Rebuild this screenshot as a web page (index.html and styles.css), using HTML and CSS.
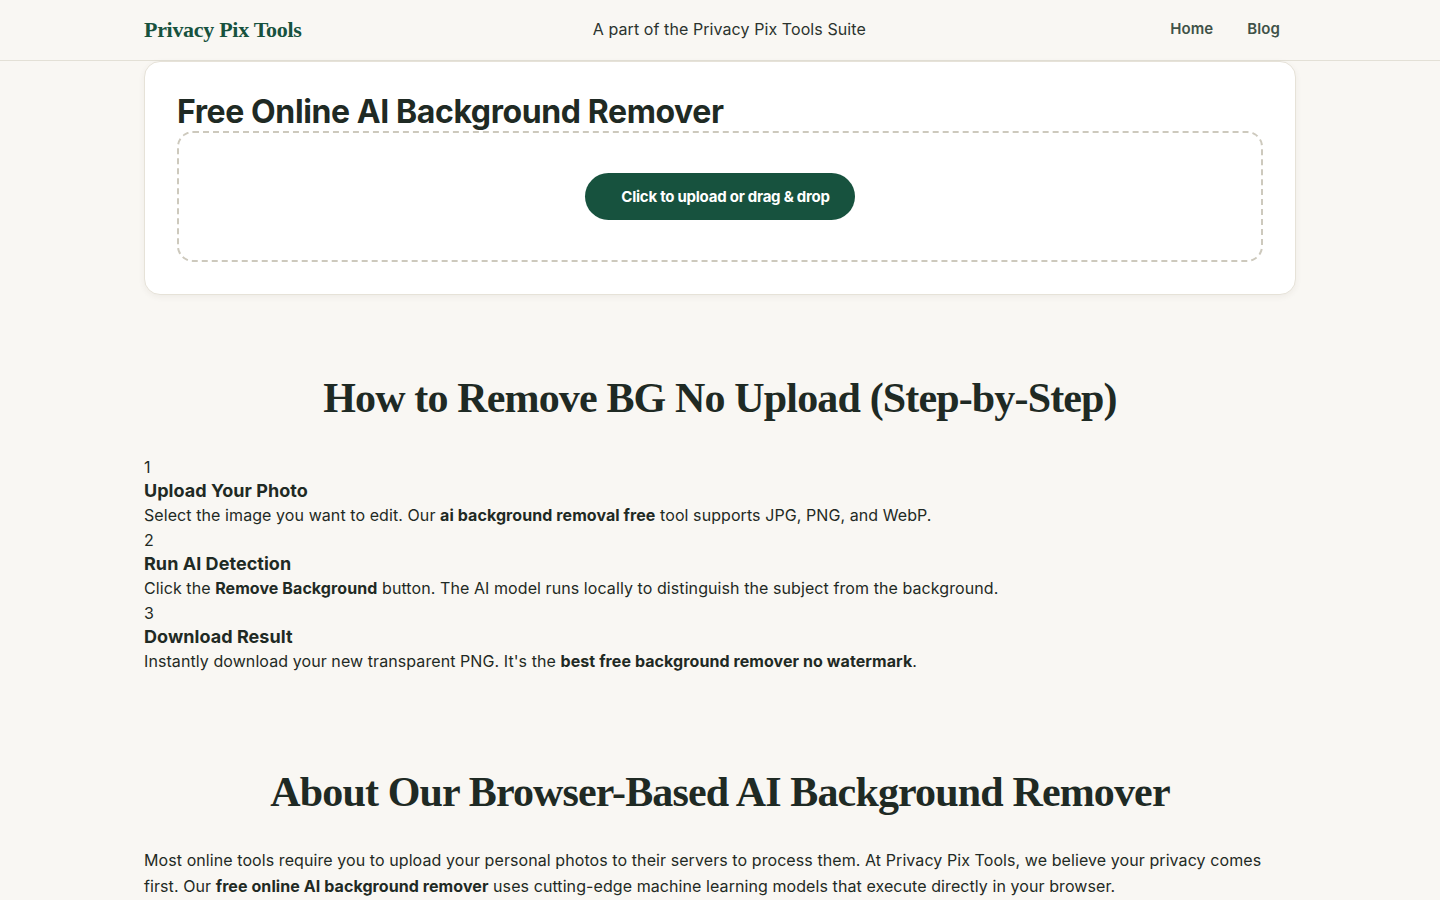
FILE: index.html
```html
<!DOCTYPE html>
<html lang="en">
<head>
<meta charset="utf-8">
<title>Free Online AI Background Remover</title>
<link rel="stylesheet" href="styles.css">
</head>
<body>
<header class="site-header">
  <div class="header-inner">
    <a class="logo" href="#">Privacy Pix Tools</a>
    <div class="tagline">A part of the Privacy Pix Tools Suite</div>
    <nav class="nav">
      <a href="#">Home</a>
      <a href="#">Blog</a>
    </nav>
  </div>
</header>
<main class="container">
  <section class="tool-card">
    <h1 class="tool-title">Free Online AI Background Remover</h1>
    <div class="dropzone">
      <button class="upload-btn">Click to upload or drag &amp; drop</button>
    </div>
  </section>

  <section class="howto">
    <h2 class="serif-heading">How to Remove BG No Upload (Step-by-Step)</h2>
    <div class="steps">
      <div class="step">
        <div class="step-num">1</div>
        <h3 class="step-title">Upload Your Photo</h3>
        <p class="step-desc">Select the image you want to edit. Our <strong>ai background removal free</strong> tool supports JPG, PNG, and WebP.</p>
      </div>
      <div class="step">
        <div class="step-num">2</div>
        <h3 class="step-title">Run AI Detection</h3>
        <p class="step-desc">Click the <strong>Remove Background</strong> button. The AI model runs locally to distinguish the subject from the background.</p>
      </div>
      <div class="step">
        <div class="step-num">3</div>
        <h3 class="step-title">Download Result</h3>
        <p class="step-desc">Instantly download your new transparent PNG. It's the <strong>best free background remover no watermark</strong>.</p>
      </div>
    </div>
  </section>

  <section class="about">
    <h2 class="serif-heading">About Our Browser-Based AI Background Remover</h2>
    <p class="about-text">Most online tools require you to upload your personal photos to their servers to process them. At Privacy Pix Tools, we believe your privacy comes first. Our <strong>free online AI background remover</strong> uses cutting-edge machine learning models that execute directly in your browser.</p>
  </section>
</main>
</body>
</html>
```

FILE: styles.css
```css
* { box-sizing: border-box; }
html, body { margin: 0; padding: 0; }
body {
  background: #f9f7f3;
  color: #1f2a24;
  font-family: Inter, "Noto Sans", sans-serif;
  font-size: 16px;
  line-height: 1.5;
  letter-spacing: 0.08px;
}
a { text-decoration: none; }

.site-header {
  height: 61px;
  border-bottom: 1px solid #e3e0d6;
  background: #f9f7f3;
}
.header-inner {
  width: 1152px;
  margin: 0 auto;
  height: 60px;
  display: flex;
  align-items: center;
  justify-content: space-between;
  padding-bottom: 2px;
}
.logo {
  font-family: "Liberation Serif", "Times New Roman", serif;
  font-weight: 700;
  font-size: 22px;
  color: #17523e;
  letter-spacing: -0.3px;
}
.tagline {
  font-size: 16px;
  color: #2b332e;
}
.nav {
  display: flex;
  gap: 34px;
  padding-left: 13px;
  padding-right: 16px;
  padding-top: 1px;
}
.nav a {
  font-weight: 600;
  font-size: 15px;
  color: #3f5248;
  letter-spacing: 0.1px;
}

.container {
  width: 1152px;
  margin: 0 auto;
}

.tool-card {
  background: #ffffff;
  border: 1px solid #e6e2d8;
  border-radius: 16px;
  box-shadow: 0 2px 6px rgba(60, 50, 30, 0.06);
  padding: 31px 32px 32px;
}
.tool-title {
  margin: 0;
  font-size: 32px;
  line-height: 38px;
  font-weight: 700;
  letter-spacing: -0.4px;
  color: #1f2a24;
}
.dropzone {
  border: 2px dashed #cdc9bd;
  border-radius: 16px;
  padding: 40px 0;
  display: flex;
  justify-content: center;
}
.upload-btn {
  font-family: Inter, "Noto Sans", sans-serif;
  background: #17523e;
  color: #ffffff;
  border: none;
  border-radius: 24px;
  height: 47px;
  padding: 0 25px 0 36px;
  font-size: 15px;
  font-weight: 700;
  letter-spacing: -0.25px;
}

.howto { padding-top: 78px; }
.serif-heading {
  font-family: "Liberation Serif", "Times New Roman", serif;
  font-weight: 700;
  font-size: 42px;
  line-height: 50px;
  text-align: center;
  margin: 0;
  color: #1f2a24;
  letter-spacing: -0.85px;
}
.steps { margin-top: 32px; }
.step { margin-bottom: 1px; }
.step-num { font-size: 16px; line-height: 24px; }
.step-title {
  margin: 0;
  font-size: 18px;
  line-height: 24px;
  font-weight: 700;
  letter-spacing: 0.05px;
}
.step-desc {
  margin: 0;
  font-size: 16px;
  line-height: 24px;
}
.step-desc strong { font-weight: 700; }

.about { padding-top: 93px; }
.about-text {
  margin: 30px 0 0;
  font-size: 16px;
  line-height: 26px;
}
```
